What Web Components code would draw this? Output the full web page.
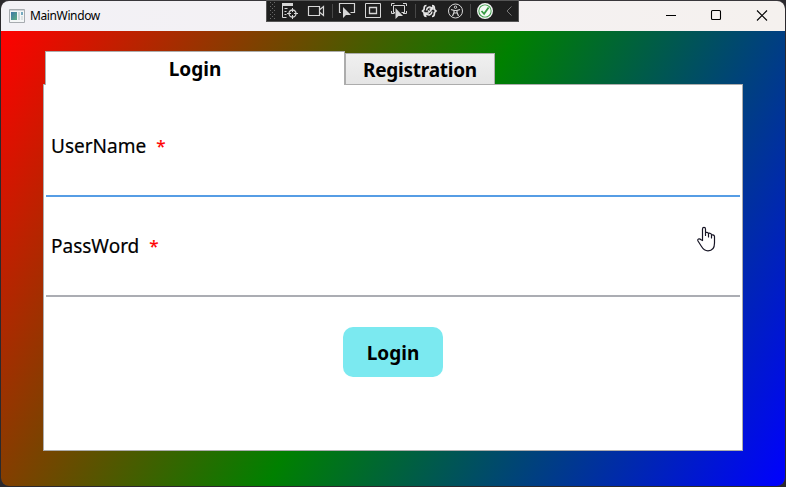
<!DOCTYPE html>
<html lang="en">
<head>
<meta charset="utf-8">
<title>MainWindow</title>
<style>
html, body { margin: 0; width: 786px; height: 487px; overflow: hidden; background: #2b292d; }
body { font-family: "Noto Sans", "Open Sans", sans-serif; color: #000; }
</style>
</head>
<body>
<app-window></app-window>
<script>
const define = (name, html) => customElements.define(name, class extends HTMLElement {
  constructor() {
    super();
    this.attachShadow({ mode: 'open' }).innerHTML = html;
  }
});

define('title-bar', `
<style>
:host { display: flex; height: 30px; background: linear-gradient(90deg, #f2f1f6, #f4f1f3 50%, #f5f1ee); align-items: center; }
.icon { width: 16px; height: 14px; margin-left: 8px; }
.title { font-size: 12px; line-height: 16px; margin-left: 5px; letter-spacing: -0.38px; flex: 1; white-space: nowrap; }
.btn { width: 46px; height: 30px; }
svg { display: block; flex: none; }
</style>
<svg class="icon" viewBox="0 0 16 14"><defs><linearGradient id="g" x2="1" y2="1"><stop stop-color="#3c78a8"/><stop offset="1" stop-color="#5fae82"/></linearGradient></defs><path d="M.5.5h15v13H.5z" fill="#f4f6f7" stroke="#a7abb0"/><path d="M1 1h14v1H1z" fill="#cfd5da"/><path d="M2 3h6v8H2z" fill="url(#g)"/><path d="M9 3h2v8H9z" fill="#cfdadd"/><path d="M12 3h2v3h-2z" fill="#76aac0"/><path d="M12 7h2v4h-2z" fill="#dde2e4"/></svg>
<span class="title"><slot></slot></span>
<svg class="btn" viewBox="0 0 46 30"><path d="M19 14.5h10" stroke="#000"/></svg>
<svg class="btn" viewBox="0 0 46 30"><rect x="18.5" y="9.500" width="9" height="9" rx="1" fill="none" stroke="#000" stroke-width="1.1"/></svg>
<svg class="btn" viewBox="0 0 46 30"><path d="M18 9.500l10 10m0-10l-10 10" stroke="#000" stroke-width="1.1"/></svg>
`);

define('debug-toolbar', `
<style>
:host { display: block; box-sizing: border-box; width: 253px; height: 22px; background: #1f1f1f; border: 1px solid #555; }
svg { display: block; }
</style>
<svg width="251" height="20" viewBox="267 1 251 20" fill="none" stroke="#d6d6d6">
<path fill="#686868" stroke="none" d="M270 2h1v1h-1zM274 2h1v1h-1zM272 4h1v1h-1zM270 6h1v1h-1zM274 6h1v1h-1zM272 8h1v1h-1zM270 10h1v1h-1zM274 10h1v1h-1zM272 12h1v1h-1zM270 14h1v1h-1zM274 14h1v1h-1zM272 16h1v1h-1zM270 18h1v1h-1zM274 18h1v1h-1z"/>
<path d="M282 3h11v3h-11z" fill="#d6d6d6" stroke="none"/><path d="M282.500 5v12.500h4M284.500 8.500h3M284.500 11.500h2M284.500 14.500h2"/><circle cx="292.500" cy="13.500" r="3.500" stroke-width="1.3"/><path d="M292.500 8v4M292.500 15v4M287 13.500h4M294 13.500h4"/>
<path d="M308.500 6.500h11v9h-11zM320 9.500l3.500-3v9l-3.500-3" stroke-width="1.2"/>
<path d="M332.500 4v14M415.500 4v14M470.500 4v14" stroke="#484848"/>
<path d="M341 12.500h-1.500v-9h15v9h-4" stroke-width="1.2"/><path d="M343 7v11l3-3h5z" fill="#d6d6d6" stroke="none"/>
<path d="M365.500 3.500h15v14h-15z"/><path d="M369.500 7.500h7v6h-7z" stroke-width="1.3"/>
<path d="M391.500 6v-2.500h3M403 3.500h3.500v2.500M391.500 11v2.500h3M403 13.500h3.500v-2.500M395 12.500h-1.500v-7h11v7h-3"/><path d="M395.500 8v11l3-3h4.500z" fill="#d6d6d6" stroke="none"/>
<path d="M426.500 5.500c-3 0-2 1.500-2.500 4l-1.500 1.500 1.500 1.500c.5 2.500-.5 4 2.500 4M432 5.500c3 0 2 1.500 2.500 4l1.500 1.500-1.500 1.500c-.5 2.500.5 4-2.500 4" stroke="#e6e6e6" stroke-width="1.700"/><path d="M426.500 10.500c.3-3.500 3.500-4.500 6-2M433 5.500v3.500h-3.500M432 11.500c-.3 3.500-3.500 4.500-6 2M425.500 16.500v-3.500h3.500M428 10.500l1.500 1.500 2.500-3" stroke="#e6e6e6" stroke-width="1.500"/>
<circle cx="455.500" cy="11" r="7"/><circle cx="455.500" cy="7.200" r="1.200"/><path d="M451 9.500l3 1v2l-1.500 3.500M460 9.500l-3 1v2l1.500 3.500M454 10.500h3M454 13h3" stroke-width="1.2"/>
<circle cx="485" cy="11" r="7.300" fill="#379b43" stroke="#f1f1f1" stroke-width="1.400"/><circle cx="485" cy="11" r="5.700" fill="#f4faf4" stroke="none"/><path d="M481.500 11l2.600 2.800 4.500-6.300" stroke="#379b43" stroke-width="1.800"/>
<path d="M511.500 6.500l-4.500 4.500 4.500 4.500" stroke="#777"/>
</svg>
`);

define('tab-header', `
<style>
:host { display: block; box-sizing: border-box; width: 150px; height: 31px; border: 1px solid #acacac; border-bottom: 0; background: linear-gradient(#f0f0f0, #e5e5e5); font-weight: 700; font-size: 19px; line-height: 32px; text-align: center; white-space: nowrap; letter-spacing: -0.25px; }
:host([selected]) { width: 300px; height: 34px; background: #fff; line-height: 34px; margin-bottom: -1px; letter-spacing: 0; z-index: 1; }
</style><slot></slot>
`);

define('form-field', `
<style>
:host { display: flex; box-sizing: border-box; height: 100px; padding: 0 0 0 5px; border-bottom: 2px solid #abadb3; font-size: 19px; line-height: 24px; align-items: center; }
:host([focused]) { border-color: #569de5; }
span { white-space: nowrap; letter-spacing: 0; -webkit-text-stroke: 0.2px #000; }
b { color: #f00; font-weight: 400; font-size: 17px; margin-left: 10px; -webkit-text-stroke: 0.2px #f00; }
</style><span><slot></slot></span><b>*</b>
`);

define('action-button', `
<style>
:host { display: block; width: 100px; height: 50px; border-radius: 10px; background: #7be9f0; font-weight: 700; font-size: 19px; line-height: 52px; text-align: center; }
</style><slot></slot>
`);

define('hand-cursor', `
<style>:host { display: block; width: 20px; height: 26px; } svg { display: block; }</style>
<svg width="20" height="26" viewBox="697 226 20 26"><path d="M702.500 240.500V229c0-2.200 3-2.200 3 0v6.500V233c0-1 3-1 3 1v3-3c0-1.200 3-1.200 3 1v3-2.500c0-1.200 3-.7 3 1v6.500c0 5-2.500 7.800-6.500 7.800-3.500 0-5-1.800-6.500-4.300l-3.500-5.500c-.8-1.700 1-3.200 3-1.300z" fill="#fff" stroke="#171525" stroke-width="1.200" stroke-linejoin="round"/></svg>
`);

define('app-window', `
<style>
:host { display: block; position: relative; width: 786px; height: 487px; }
.frame { margin: 0 0 0 1px; width: 784px; height: 486px; box-sizing: border-box; padding-top: 1px; border-radius: 8px; overflow: hidden; background: #39373b; }
.window { border-radius: 8px; overflow: hidden; height: 485px; }
.client { height: 455px; box-sizing: border-box; padding: 20px 0 0 42px; background: linear-gradient(119deg, #f00, #008000 50%, #00f); }
.tabs { display: flex; align-items: flex-end; padding-left: 2px; }
.panel { box-sizing: border-box; width: 700px; height: 367px; border: 1px solid #acacac; background: #fff; padding: 12px 2px 0; display: flex; flex-direction: column; }
.panel action-button { align-self: center; margin-top: 30px; }
debug-toolbar { position: absolute; left: 266px; top: 0; }
hand-cursor { position: absolute; left: 697px; top: 226px; }
.tabs tab-header[selected] { position: relative; }
</style>
<div class="frame"><div class="window">
<title-bar>MainWindow</title-bar>
<div class="client">
<div class="tabs"><tab-header selected>Login</tab-header><tab-header>Registration</tab-header></div>
<div class="panel">
<form-field focused>UserName</form-field>
<form-field>PassWord</form-field>
<action-button>Login</action-button>
</div>
</div>
</div></div>
<debug-toolbar></debug-toolbar>
<hand-cursor></hand-cursor>
`);
</script>
</body>
</html>
